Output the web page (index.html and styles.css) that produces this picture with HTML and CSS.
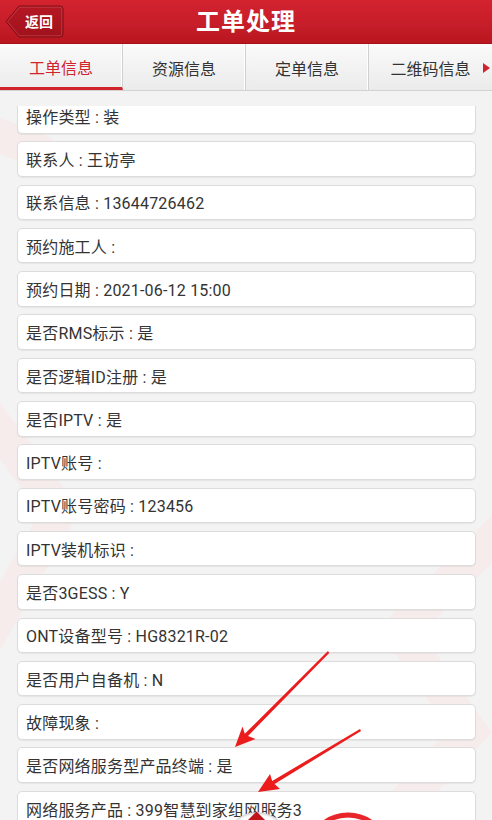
FILE: index.html
```html
<!DOCTYPE html>
<html lang="zh-CN">
<head>
<meta charset="utf-8">
<title>工单处理</title>
<link rel="stylesheet" href="styles.css">
</head>
<body>
<div class="app">
  <header class="topbar">
    <div class="back">
      <svg class="back-shape" width="59" height="33" viewBox="0 0 59 33">
        <defs>
          <linearGradient id="bg" x1="0" y1="0" x2="0" y2="1">
            <stop offset="0" stop-color="#b51823"/>
            <stop offset="1" stop-color="#a0121c"/>
          </linearGradient>
        </defs>
        <path d="M1 16.5 L14 1 H55 Q58 1 58 4 V29 Q58 32 55 32 H14 Z" fill="url(#bg)" stroke="#7f0d15" stroke-width="1"/>
        <path d="M2.5 16.5 L14.5 2.2 H55 Q56.8 2.2 56.8 4 V29 Q56.8 30.8 55 30.8 H14.5 Z" fill="none" stroke="#d2525a" stroke-width="0.8" opacity="0.7"/>
      </svg>
      <span class="back-text">返回</span>
    </div>
    <h1 class="title">工单处理</h1>
    <div class="spacer"></div>
  </header>

  <nav class="tabs">
    <div class="tab active">工单信息</div>
    <div class="tab">资源信息</div>
    <div class="tab">定单信息</div>
    <div class="tab last">二维码信息<span class="more"></span></div>
  </nav>

  <main class="content">
    <svg class="watermark" width="492" height="729" viewBox="0 0 492 729">
      <g fill="none" stroke="#f6ecec" stroke-width="34" stroke-linecap="round">
        <path d="M-40 30 L40 60"/>
        <path d="M-30 300 L60 420 L-20 560"/>
        <path d="M520 420 L400 540 L470 640 L360 760"/>
      </g>
    </svg>
    <div class="viewport">
      <ul class="list">
        <li class="item">操作类型 : 装</li>
        <li class="item">联系人 : 王访亭</li>
        <li class="item">联系信息 : 13644726462</li>
        <li class="item">预约施工人 :</li>
        <li class="item">预约日期 : 2021-06-12 15:00</li>
        <li class="item">是否RMS标示 : 是</li>
        <li class="item">是否逻辑ID注册 : 是</li>
        <li class="item">是否IPTV : 是</li>
        <li class="item">IPTV账号 :</li>
        <li class="item">IPTV账号密码 : 123456</li>
        <li class="item">IPTV装机标识 :</li>
        <li class="item">是否3GESS : Y</li>
        <li class="item">ONT设备型号 : HG8321R-02</li>
        <li class="item">是否用户自备机 : N</li>
        <li class="item">故障现象 :</li>
        <li class="item">是否网络服务型产品终端 : 是</li>
        <li class="item">网络服务产品 : 399智慧到家组网服务3</li>
      </ul>
    </div>
  </main>

  <svg class="annot" width="492" height="820" viewBox="0 0 492 820">
    <circle cx="257" cy="846" r="33" fill="#f4f4f4" stroke="#dcdcdc" stroke-width="1.5"/>
    <circle cx="257" cy="846" r="31" fill="#ffffff"/>
    <path d="M247 821 L256.5 811.5 L266 821 Z" fill="#c0141c"/>
    <circle cx="348" cy="855" r="40" fill="none" stroke="#e8262a" stroke-width="5"/>
    <path d="M328 651 L329.2 653 L248 736 L255.5 739 L235 747 L242.5 726.5 L244.8 733.8 Z" fill="#ec1c1c"/>
    <path d="M360 729 L361 731 L274.5 784 L280 789 L258 792 L270 774 L272.2 781 Z" fill="#ec1c1c"/>
  </svg>
</div>
</body>
</html>
```
FILE: styles.css
```css
* { box-sizing: border-box; }
html, body {
  margin: 0;
  padding: 0;
}
body {
  width: 492px;
  height: 820px;
  overflow: hidden;
  font-family: Roboto, "Noto Sans CJK SC", "Noto Sans", sans-serif;
  color: #333;
  background: #f3f3f3;
}
.app {
  position: relative;
  width: 492px;
  height: 820px;
  display: flex;
  flex-direction: column;
  overflow: hidden;
}
.topbar {
  height: 44px;
  flex: none;
  display: grid;
  grid-template-columns: 1fr auto 1fr;
  align-items: center;
  background: linear-gradient(#d3232f, #c51d29 60%, #b9161f);
  border-bottom: 1px solid #a5111a;
}
.back {
  justify-self: start;
  margin-left: 5px;
  margin-top: -1px;
  display: grid;
  width: 59px;
  height: 33px;
}
.back-shape, .back-text {
  grid-area: 1 / 1;
}
.back-text {
  align-self: center;
  justify-self: start;
  margin-left: 20px;
  color: #fff;
  font-size: 14px;
  font-weight: bold;
}
.title {
  margin: 0;
  color: #fff;
  font-size: 24px;
  font-weight: bold;
  line-height: 1;
  letter-spacing: 1px;
}
.tabs {
  height: 47px;
  flex: none;
  display: flex;
  background: linear-gradient(#fafafa, #ebebeb);
  border-bottom: 1px solid #d2d2d2;
}
.tab {
  width: 123px;
  display: flex;
  align-items: center;
  justify-content: center;
  font-size: 16px;
  color: #333;
  border-right: 1px solid #d0d0d0;
  box-shadow: inset -1px 0 0 #ffffff;
  padding-top: 1px;
}
.tab.active {
  color: #d2232d;
  border-bottom: 3px solid #d2232d;
  padding-top: 3px;
}
.tab.last {
  flex: 1;
  border-right: none;
  box-shadow: none;
  position: relative;
}
.more {
  position: absolute;
  right: 2px;
  top: 19px;
  width: 0;
  height: 0;
  border-top: 5px solid transparent;
  border-bottom: 5px solid transparent;
  border-left: 7px solid #d2232d;
}
.content {
  flex: 1;
  position: relative;
  padding-top: 15px;
  display: flex;
  flex-direction: column;
  min-height: 0;
}
.watermark {
  position: absolute;
  left: 0;
  top: 0;
}
.viewport {
  position: relative;
  flex: 1;
  overflow: hidden;
}
.list {
  list-style: none;
  margin: -8px 16px 0 17px;
  padding: 0;
  display: flex;
  flex-direction: column;
  gap: 7.8px;
}
.item {
  height: 35.5px;
  display: flex;
  align-items: center;
  padding-left: 8px;
  background: #fff;
  border: 1px solid #dcdcdc;
  border-radius: 5px;
  box-shadow: 0 1px 1px rgba(0, 0, 0, 0.06);
  font-size: 16px;
  letter-spacing: 0.2px;
  color: #333;
  white-space: nowrap;
}
.annot {
  position: absolute;
  left: 0;
  top: 0;
  pointer-events: none;
}
```
